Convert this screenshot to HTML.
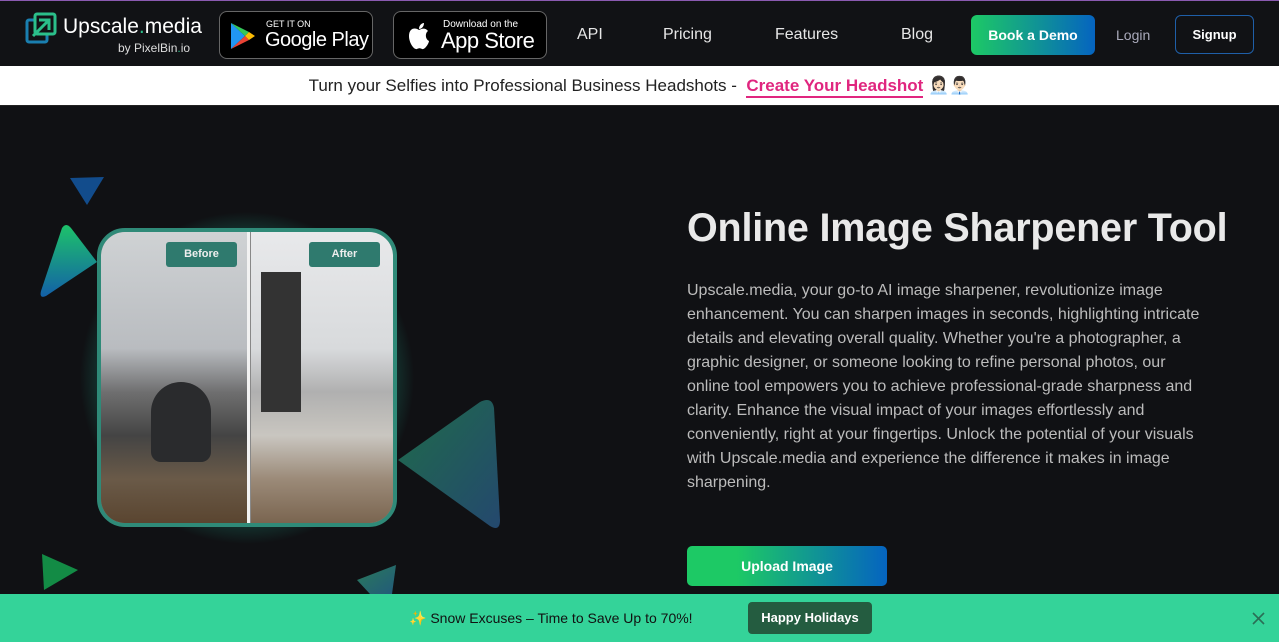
<!DOCTYPE html>
<html><head><meta charset="utf-8"><style>
*{margin:0;padding:0;box-sizing:border-box}
body{width:1279px;height:642px;overflow:hidden;background:#101114;font-family:"Liberation Sans",sans-serif;position:relative}
.abs{position:absolute}
nav{position:absolute;left:0;top:0;width:1279px;height:66px;background:#111215;border-top:1px solid #8a5ab0}
.store{position:absolute;top:10px;height:48px;border:1px solid #666;border-radius:8px;background:#000;color:#fff}
.nl{position:absolute;top:24px;color:#e6e6e6;font-size:16px}
.banner{position:absolute;top:66px;left:0;width:1279px;height:40px;background:#fff;border-bottom:1px solid #222;font-size:17px;color:#222;text-align:center;line-height:40px}
h1{position:absolute;left:687px;top:206px;font-size:39.5px;color:#e9e9e9;font-weight:bold;letter-spacing:-0.2px}
p.d{position:absolute;left:687px;top:279px;white-space:nowrap;font-size:16px;line-height:24px;color:#bcbcbc}
.bar{position:absolute;left:0;top:594px;width:1279px;height:48px;background:#34d399}
</style></head><body>
<nav>
<svg class="abs" style="left:25px;top:11px" width="32" height="32" viewBox="0 0 32 32"><rect x="2" y="8" width="20" height="22" rx="2" fill="none" stroke="#1a7fb0" stroke-width="3"/><rect x="10" y="2" width="20" height="20" rx="2" fill="#111215" stroke="#2bbf8a" stroke-width="3"/><path d="M8 24 L24 8 M14 8 H24 V18" stroke="#2bbf8a" stroke-width="3" fill="none"/></svg>
<div class="abs" style="left:63px;top:14px;color:#fff;font-size:21px">Upscale<span style="color:#2bbf8a">.</span>media</div>
<div class="abs" style="left:118px;top:40px;color:#ddd;font-size:12px">by PixelBin<span style="color:#2bbf8a">.</span>io</div>
<div class="store" style="left:219px;width:154px">
<svg class="abs" style="left:10px;top:10px" width="26" height="28" viewBox="0 0 26 28"><path d="M1 1 L15 14 L1 27Z" fill="#2196f3"/><path d="M1 1 L19 10 L15 14Z" fill="#34c759"/><path d="M1 27 L19 18 L15 14Z" fill="#ea4335"/><path d="M19 10 L25 14 L19 18 L15 14Z" fill="#fbbc05"/></svg>
<div class="abs" style="left:46px;top:7px;font-size:9px">GET IT ON</div>
<div class="abs" style="left:45px;top:17px;font-size:20px;letter-spacing:-0.5px">Google Play</div></div>
<div class="store" style="left:393px;width:154px">
<svg class="abs" style="left:12px;top:10px" width="26" height="28" viewBox="0 0 26 28"><path d="M13 8 C9 5 3 6 3 14 C3 21 8 28 11 27 C13 26 14 26 16 27 C19 28 23 21 23 19 C19 17 19 11 22 9 C19 5 15 7 13 8Z" fill="#fff"/><path d="M13 7 C13 3 16 1 18 1 C18 4 16 7 13 7Z" fill="#fff"/></svg>
<div class="abs" style="left:49px;top:7px;font-size:10px">Download on the</div>
<div class="abs" style="left:47px;top:16px;font-size:22px;letter-spacing:-0.5px">App Store</div></div>
<div class="nl" style="left:577px;top:25px">API</div>
<div class="nl" style="left:663px;top:25px">Pricing</div>
<div class="nl" style="left:775px;top:25px">Features</div>
<div class="nl" style="left:901px;top:25px">Blog</div>
<div class="abs" style="left:971px;top:14px;width:124px;height:40px;border-radius:6px;background:linear-gradient(90deg,#1dc965,#0564c0);color:#fff;font-weight:bold;font-size:14px;text-align:center;line-height:40px">Book a Demo</div>
<div class="nl" style="left:1116px;top:26px;font-size:14px;color:#aab">Login</div>
<div class="abs" style="left:1175px;top:14px;width:79px;height:39px;border:1px solid #1f5fa8;border-radius:6px;color:#fff;font-weight:bold;font-size:13px;text-align:center;line-height:37px">Signup</div>
</nav>
<div class="banner">Turn your Selfies into Professional Business Headshots - &nbsp;<span style="color:#e0267f;font-weight:bold;border-bottom:2px solid #e0267f;padding-bottom:1px">Create Your Headshot</span> 👩🏻‍💼👨🏻‍💼</div>

<svg class="abs" style="left:0;top:0" width="660" height="594">
<defs>
<linearGradient id="g1" x1="0" y1="0" x2="0" y2="1"><stop offset="0" stop-color="#1dc26a"/><stop offset="1" stop-color="#1360a8"/></linearGradient>
<linearGradient id="g2" x1="0" y1="0" x2="1" y2="1"><stop offset="0" stop-color="#1f6b4a"/><stop offset="1" stop-color="#24486e"/></linearGradient>
<linearGradient id="g3" x1="0" y1="0" x2="1" y2="1"><stop offset="0" stop-color="#2a7a5a"/><stop offset="1" stop-color="#225a7a"/></linearGradient>
<radialGradient id="gl"><stop offset="0.75" stop-color="#1ea88a" stop-opacity="0.45"/><stop offset="1" stop-color="#1ea88a" stop-opacity="0"/></radialGradient>
</defs>
<path d="M70 178 L104 177 L87 205Z" fill="#124c8c"/>
<path d="M62 228 Q66 222 71 228 L97 262 L46 296 Q39 299 41 291Z" fill="url(#g1)"/>
<path d="M398 460 L480 402 Q492 396 494 408 L500 520 Q500 532 490 526Z" fill="url(#g2)"/>
<path d="M42 554 L78 570 L44 590Z" fill="#138b45"/>
<path d="M357 580 L396 565 L392 594 L370 594Z" fill="url(#g3)"/>
<rect x="80" y="212" width="334" height="332" rx="45" fill="url(#gl)"/>
</svg>
<div class="abs" style="left:97px;top:228px;width:300px;height:299px;border:4px solid #2f8a78;border-radius:28px;overflow:hidden;background:#888">
<div class="abs" style="left:0;top:0;width:148px;height:291px;background:linear-gradient(180deg,#cfd2d4 0%,#b9bcc0 40%,#6f6f70 55%,#444 70%,#6a5a48 85%,#5a4530 100%)"></div>
<div class="abs" style="left:150px;top:0;width:146px;height:291px;background:linear-gradient(180deg,#e8e9eb 0%,#d8dadc 40%,#b0b0b0 55%,#c9c6c0 70%,#9b8a78 85%,#7a6550 100%)"></div>
<div class="abs" style="left:50px;top:150px;width:60px;height:80px;background:#2a2b2d;border-radius:30px 30px 10px 10px"></div>
<div class="abs" style="left:160px;top:40px;width:40px;height:140px;background:#333"></div>
<div class="abs" style="left:146px;top:0;width:3px;height:291px;background:#f2f2f2"></div>
<div class="abs" style="left:65px;top:10px;width:71px;height:25px;background:#2f7a6e;border-radius:3px;color:#eee;font-size:11px;font-weight:bold;text-align:center;line-height:25px">Before</div>
<div class="abs" style="left:208px;top:10px;width:71px;height:25px;background:#2f7a6e;border-radius:3px;color:#eee;font-size:11px;font-weight:bold;text-align:center;line-height:25px">After</div>
</div>

<h1>Online Image Sharpener Tool</h1>
<p class="d">Upscale.media, your go-to AI image sharpener, revolutionize image<br>enhancement. You can sharpen images in seconds, highlighting intricate<br>details and elevating overall quality. Whether you're a photographer, a<br>graphic designer, or someone looking to refine personal photos, our<br>online tool empowers you to achieve professional-grade sharpness and<br>clarity. Enhance the visual impact of your images effortlessly and<br>conveniently, right at your fingertips. Unlock the potential of your visuals<br>with Upscale.media and experience the difference it makes in image<br>sharpening.</p>
<div class="abs" style="left:687px;top:546px;width:200px;height:40px;border-radius:5px;background:linear-gradient(90deg,#1dc965 25%,#0564c0);color:#fff;font-weight:bold;font-size:14px;text-align:center;line-height:40px">Upload Image</div>

<div class="bar">
<div class="abs" style="left:409px;top:16px;font-size:14px;color:#111">✨ Snow Excuses – Time to Save Up to 70%!</div>
<div class="abs" style="left:748px;top:8px;width:124px;height:32px;border-radius:4px;background:#245c40;color:#fff;font-weight:bold;font-size:13px;text-align:center;line-height:32px">Happy Holidays</div>
<svg class="abs" style="left:1252px;top:18px" width="13" height="13"><path d="M1 1 L12 12 M12 1 L1 12" stroke="#2a6e55" stroke-width="1.6"/></svg>
</div>
</body></html>
